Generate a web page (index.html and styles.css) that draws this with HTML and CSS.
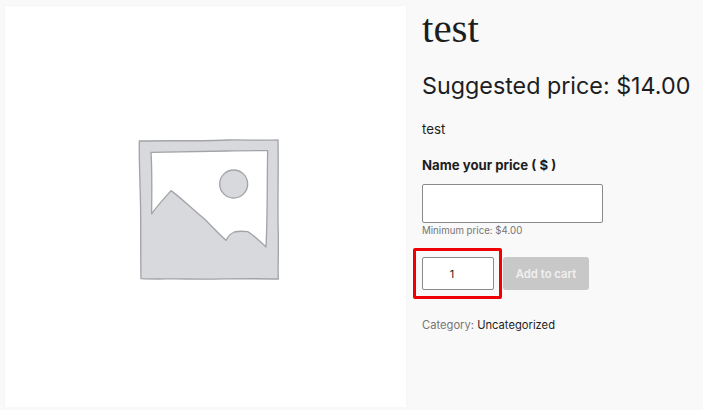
FILE: index.html
```html
<!DOCTYPE html>
<html lang="en">

<head>
    <meta charset="UTF-8" />
    <meta name="viewport" content="width=device-width, initial-scale=1.0" />
    <title>test</title>
    <link rel="stylesheet" href="styles.css">
</head>

<body>
    <div class="product">
        <div class="product-gallery">
            <svg class="placeholder-icon" viewBox="0 0 426 426" aria-hidden="true">
                <path class="frame" d="M7 6 C100 4 200 7 270 3 C320 2 380 5 423 3 C425 100 421 200 424 290 C425 340 422 390 424 420 C320 417 230 422 150 420 C100 419 50 421 12 419 C10 320 13 230 9 140 C8 90 6 50 7 6 Z" />
                <path class="window" d="M42 40 C130 39 200 37 270 36 C320 35 360 35 392 35 C390 130 392 230 387 324 C372 310 350 288 332 278 C315 276 305 276 292 279 C280 284 272 294 267 304 C240 280 225 262 200 238 C160 205 130 175 102 155 C85 175 60 200 44 225 C44 170 46 100 42 40 Z" />
                <circle class="sun" cx="290" cy="135" r="42" />
            </svg>
        </div>

        <div class="summary">
            <h1 class="product-title">test</h1>
            <p class="price">Suggested price: $14.00</p>
            <p class="short-desc">test</p>

            <form class="cart">
                <label class="price-label" for="namePrice">Name your price ( $ )</label>
                <input type="text" id="namePrice" class="price-input" />
                <small class="min-price">Minimum price: $4.00</small>

                <div class="cart-row">
                    <div class="qty-wrap">
                        <input type="text" class="qty-input" value="1" />
                        <span class="qty-highlight"></span>
                    </div>
                    <button type="button" class="add-btn" disabled>Add to cart</button>
                </div>
            </form>

            <p class="product-meta">Category: <a href="#">Uncategorized</a></p>
        </div>
    </div>
</body>

</html>
```

FILE: styles.css
```css
/* Base Styles */
body {
    margin: 0;
    background-color: #f9f9f9;
    font-family: Inter, "Liberation Sans", sans-serif;
    color: #1e1e1e;
}

.product {
    display: flex;
    padding: 6px 0 0 5px;
}

.product-gallery {
    width: 401px;
    height: 401px;
    flex: none;
    display: flex;
    justify-content: center;
    align-items: center;
    background-color: #fff;
    box-shadow: 0 0 2px rgba(0, 0, 0, 0.05);
}

.placeholder-icon {
    width: 142px;
    height: 142px;
    margin: 7px 0 0 5px;
    filter: blur(0.4px);
}

.placeholder-icon .frame,
.placeholder-icon .window,
.placeholder-icon .sun {
    stroke: #a3a4a8;
    stroke-width: 4;
    stroke-linejoin: round;
}

.placeholder-icon .frame,
.placeholder-icon .sun {
    fill: #d8d9dc;
}

.placeholder-icon .window {
    fill: #fff;
}

/* Summary */
.summary {
    padding-left: 16px;
}

.product-title {
    margin: -3px 0 0;
    font-family: "Liberation Serif", serif;
    font-size: 41px;
    font-weight: 400;
    line-height: 50px;
}

.price {
    margin: 16px 0 0;
    font-size: 23.3px;
    line-height: 34px;
    white-space: nowrap;
}

.short-desc {
    margin: 16px 0 0;
    font-size: 13.3px;
    line-height: 20px;
}

.cart {
    display: flex;
    flex-direction: column;
    align-items: flex-start;
    margin-top: 16px;
}

.price-label {
    font-size: 13.2px;
    font-weight: 700;
    line-height: 20px;
}

.price-input {
    width: 181px;
    height: 39px;
    margin-top: 9px;
    padding: 0 10px;
    border: 1px solid #8a8a8a;
    border-radius: 2px;
    background-color: #fff;
    box-sizing: border-box;
}

.min-price {
    font-size: 9.7px;
    line-height: 14px;
    margin-top: 1px;
    color: #767676;
}

.cart-row {
    display: flex;
    gap: 9px;
    margin-top: 19px;
}

.qty-wrap {
    position: relative;
}

.qty-input {
    display: block;
    width: 72px;
    height: 33px;
    padding: 0 12px 0 0;
    border: 1px solid #8a8a8a;
    border-radius: 2px;
    background-color: #fff;
    box-sizing: border-box;
    font-family: inherit;
    font-size: 11px;
    color: #1e1e1e;
    text-align: center;
}

.qty-highlight {
    position: absolute;
    top: -9px;
    left: -9px;
    width: 83px;
    height: 45px;
    border: 3px solid #f00000;
    border-radius: 2px;
}

.add-btn {
    width: 86px;
    height: 33px;
    padding: 0;
    border: none;
    border-radius: 3px;
    background-color: #c8c8c8;
    font-family: inherit;
    font-size: 11.3px;
    font-weight: 600;
    color: #f0f0f0;
}

.product-meta {
    margin: 27px 0 0;
    font-size: 11.2px;
    line-height: 16px;
    color: #767676;
}

.product-meta a {
    color: #1e1e1e;
    text-decoration: none;
}
```
